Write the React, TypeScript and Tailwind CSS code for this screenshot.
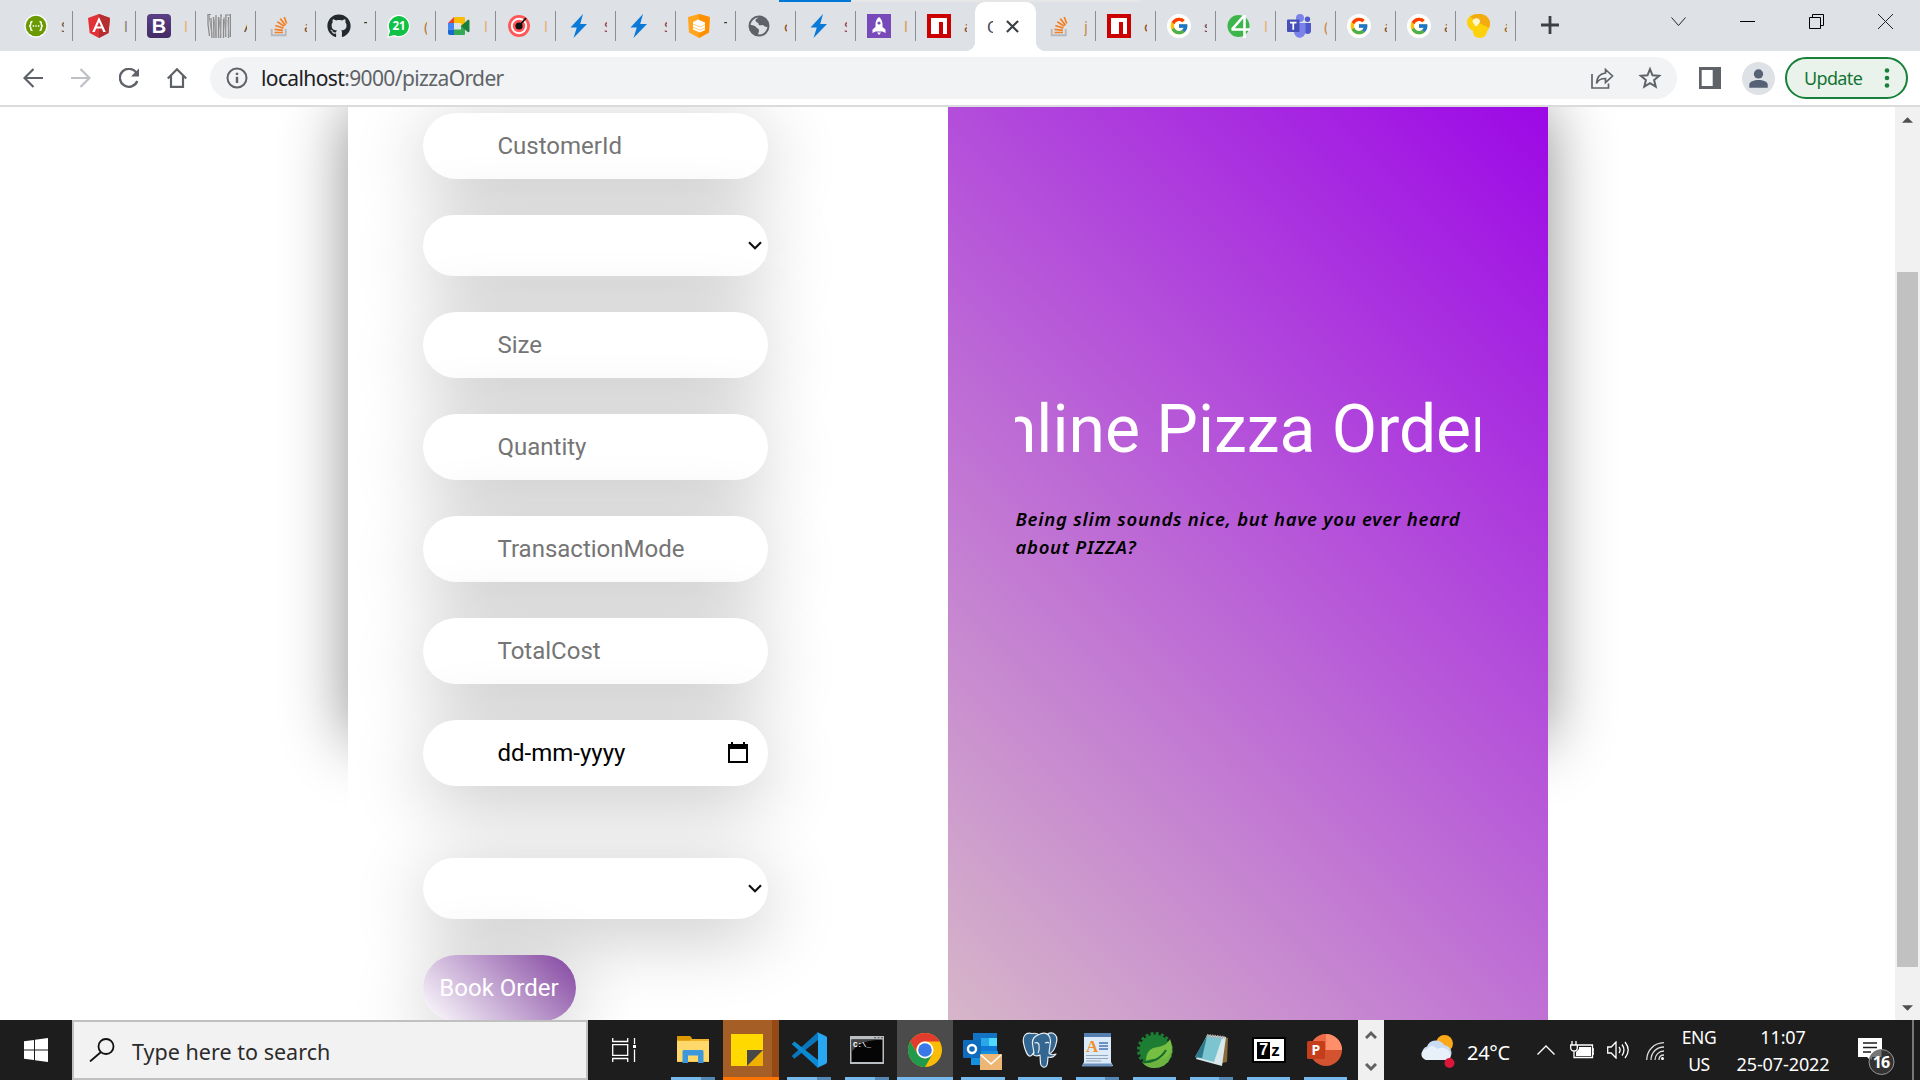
import React from "react";
import { FcGoogle } from "react-icons/fc";
import { FaGithub } from "react-icons/fa";

const Swagger = () => (
  <svg viewBox="0 0 24 24" className="size-6">
    <circle cx="12" cy="12" r="11.5" fill="#fff" />
    <circle cx="12" cy="12" r="10.3" fill="#6a9a00" />
    <path d="M8.5 7.5c-1.8 0-1.8.8-1.8 2.3 0 1.4-.3 2.2-1.6 2.2 1.3 0 1.6.8 1.6 2.2 0 1.5 0 2.3 1.8 2.3M15.5 7.5c1.8 0 1.8.8 1.8 2.3 0 1.4.3 2.2 1.6 2.2-1.3 0-1.6.8-1.6 2.2 0 1.5 0 2.3-1.8 2.3" fill="none" stroke="#fff" strokeWidth="1.5" />
    <path d="M8.7 11.3h1.4v1.4H8.7zM11.3 11.3h1.4v1.4h-1.4zM13.9 11.3h1.4v1.4h-1.4z" fill="#fff" />
  </svg>
);

const Angular = () => (
  <svg viewBox="0 0 24 24" className="size-6">
    <path d="M12 0 1 4l1.7 15L12 24l9.500-5L23 4z" fill="#e23237" />
    <path d="M12 0v24l9.500-5L23 4z" fill="#b52e31" />
    <path d="M12 3 5.200 18h2.600l1.400-3.500h5.600L16.200 18h2.600zm0 5 2 4.500h-4z" fill="#fff" />
  </svg>
);

const Bootstrap = () => (
  <div className="flex size-6 items-center justify-center rounded-[4px] bg-linear-to-b from-[#5c3f86] to-[#432c66] font-['Liberation_Sans'] text-[20px] leading-none font-bold text-white">B</div>
);

const Noise = () => (
  <svg viewBox="0 0 24 24" className="size-6" fill="none">
    <path d="M1 0v10l1.500 12M4 4l1 20M6.500 3l.5 21M9 1v23M11.500 3v21M14 1l-.5 23M16.500 5v19M19 1l-.5 22M21.500 3v21M23.500 0v23" stroke="#8b8b8b" strokeWidth="1.3" />
    <path d="M2 1l3 20M7 5l2 18M12 4l2 19M17 3l2 20M21 6l1 17" stroke="#9a9a9a" />
    <path d="M1 .5h3M13 1h2M18 1h5" stroke="#8b8b8b" />
  </svg>
);

const Stack = () => (
  <svg viewBox="0 0 24 24" className="size-6" fill="none">
    <path d="M4.700 15v6.300h14V15" stroke="#b5b9bd" strokeWidth="1.9" />
    <path d="M7.500 18.500h8.500M7.500 15.400l8.500 1M8.300 11.500l8 2.600M10.300 7.800l7 4.500M13.300 4.600l5.200 6.600M17.200 3l2.500 6.500" stroke="#f48024" strokeWidth="1.7" />
  </svg>
);

const Whatsapp = () => (
  <svg viewBox="0 0 24 24" className="size-6">
    <path d="M0 24 1.800 17.500A11.300 11.300 0 1 1 6.700 22.200z" fill="#fff" />
    <path d="M1.500 22.500 3.200 17A10 10 0 1 1 7.200 20.900z" fill="#0fc144" />
    <text x="12" y="16.3" textAnchor="middle" fontFamily="Noto Sans" fontWeight="700" fontSize="11.5" fill="#fff">21</text>
  </svg>
);

const Meet = () => (
  <svg viewBox="0 0 24 24" className="size-6">
    <path d="M1 9l6-6v6z" fill="#ea4335" />
    <path d="M7 3h9.500c1 0 1.500.5 1.500 1.500V12l-4 2V9H7z" fill="#fbbc04" />
    <path d="M1 9h6v6.500H1z" fill="#4285f4" />
    <path d="M1 15.500h6V21H3c-1.300 0-2-.7-2-2z" fill="#1967d2" />
    <path d="M7 15.500h7V12h4v7.500c0 1-.5 1.500-1.500 1.500H7z" fill="#34a853" />
    <path d="M14 12l6.500-5.700c1-.8 2-.5 2 .7v10c0 1.200-1 1.500-2 .7z" fill="#188038" />
  </svg>
);

const Target = () => (
  <svg viewBox="0 0 24 24" className="size-6">
    <circle cx="12" cy="12" r="11" fill="#ff5757" />
    <circle cx="12" cy="12" r="7.2" fill="none" stroke="#fff" strokeWidth="2" />
    <circle cx="12" cy="12" r="3.6" fill="#111" />
    <path d="M12 12 19 4" stroke="#111" strokeWidth="1.8" />
  </svg>
);

const Bolt = () => (
  <svg viewBox="0 0 24 24" className="size-6">
    <path d="M16 0 3.500 13.500h6.300L6.500 24 20 10h-6.800z" fill="#0b79d8" />
  </svg>
);

const Layers = () => (
  <svg viewBox="0 0 24 24" className="size-6">
    <path d="M12 0 22.800 3l-.8 15.500L12 24 2 18.500 1 3z" fill="#ffa51e" />
    <path d="M12 0 22.800 3l-.8 15.500L12 24z" fill="#ff9100" />
    <path d="m6 8 5-2.500 7 3V16l-5 2.400-7-3z" fill="#fff" />
    <path d="m6 10 7 3 5-2.400M6 13.200l7 3 5-2.400" fill="none" stroke="#ffc46b" strokeWidth=".8" />
  </svg>
);

const Globe = () => (
  <svg viewBox="0 0 24 24" className="size-6">
    <circle cx="12" cy="12" r="9.5" fill="#dee1e6" stroke="#5f6368" strokeWidth="2" />
    <path d="M3 11c2 0 5 .5 6 2s3 1.500 3 3.500-1 2.500-1 4.500C6 21 2.500 17 2.500 12zM12 2.500c-.5 2-3.500 2-3.500 4s3 1.500 3 3.500 3 1 4 1 2 2 4.500 2l1.500-1c0-5-4-9.500-9.500-9.500z" fill="#5f6368" />
  </svg>
);

const Rocket = () => (
  <div className="flex size-6 items-center justify-center bg-[#7749b9]">
    <svg viewBox="0 0 24 24" className="size-6" fill="#fff">
      <path d="M12 3c-2.500 2-3.500 4.500-3.500 7.500V13l-3 2.500V19l3-1.500h7l3 1.500v-3.500l-3-2.500v-2.500C15.500 7.500 14.500 5 12 3z" />
      <path d="M10 18.500h4l-2 2.500z" />
      <circle cx="12" cy="9" r="1.6" fill="#7749b9" />
    </svg>
  </div>
);

const Npm = () => (
  <svg viewBox="0 0 24 24" className="size-6">
    <path d="M0 0h24v24H0z" fill="#c00" />
    <path d="M4 4h16v16h-4V8h-4v12H4z" fill="#fff" />
  </svg>
);

const GoogleTab = () => (
  <div className="flex size-6 items-center justify-center rounded-full bg-white">
    <FcGoogle className="size-[20px]" />
  </div>
);

const Four = () => (
  <svg viewBox="0 0 24 24" className="size-6">
    <circle cx="11.5" cy="12" r="11" fill="#3db54a" />
    <path d="M17.500 1v23M16.800 2 5 15.300M4.500 15.500H23" stroke="#fff" strokeWidth="2.600" fill="none" />
  </svg>
);

const Teams = () => (
  <svg viewBox="0 0 24 24" className="size-6">
    <circle cx="13" cy="4" r="4" fill="#7b83eb" />
    <circle cx="20.5" cy="5.2" r="2.7" fill="#5059c9" />
    <path d="M17 9h7v8c0 3-4 4-6 2z" fill="#5059c9" />
    <path d="M7 9h11.500v8c0 9-11.500 9-11.500 0z" fill="#7b83eb" />
    <rect y="5.5" width="12.5" height="12.5" rx="1" fill="#464eb8" />
    <path d="M3 8.700h6.500M6.250 8.700v7" stroke="#fff" strokeWidth="1.7" />
  </svg>
);

const Keep = () => (
  <svg viewBox="0 0 24 24" className="size-6">
    <path d="M11 0c8 0 12 4 12 10 0 4-2 5-3 8s-3 6-7 6-7-2-7-7C2 15 0 12 0 8 0 3 5 0 11 0z" fill="#fdd20a" />
    <path d="M3 3C8-1 15-1 19 2c4 3 5 8 3 12L12 9z" fill="#f3ab12" />
    <path d="M6 6c2-3 7-2 7 1.500 0 2.500-2.500 2-2.500 4.500H8c0-2-3.500-3.500-2-6z" fill="#fff5d0" />
  </svg>
);

type Tab = { icon: React.ReactNode; mark: string; color: string };
const LEFT_TABS: Tab[] = [
  { icon: <Swagger />, mark: "S", color: "text-[#6b5a4a]" },
  { icon: <Angular />, mark: "l", color: "text-[#8a7c70]" },
  { icon: <Bootstrap />, mark: "l", color: "text-[#e5b168]" },
  { icon: <Noise />, mark: "A", color: "text-[#6b4a2a]" },
  { icon: <Stack />, mark: "a", color: "text-[#8a4a2a]" },
  { icon: <FaGithub className="size-6 text-[#24292e]" />, mark: "T", color: "text-[#333]" },
  { icon: <Whatsapp />, mark: "(", color: "text-[#b37a33]" },
  { icon: <Meet />, mark: "l", color: "text-[#e5b168]" },
  { icon: <Target />, mark: "l", color: "text-[#e5b168]" },
  { icon: <Bolt />, mark: "S", color: "text-[#8a3a4a]" },
  { icon: <Bolt />, mark: "S", color: "text-[#8a3a4a]" },
  { icon: <Layers />, mark: "T", color: "text-[#333]" },
  { icon: <Globe />, mark: "c", color: "text-[#8a4a1a]" },
  { icon: <Bolt />, mark: "S", color: "text-[#8a3a4a]" },
  { icon: <Rocket />, mark: "l", color: "text-[#d59b50]" },
  { icon: <Npm />, mark: "a", color: "text-[#8a4a2a]" },
];
const RIGHT_TABS: Tab[] = [
  { icon: <Stack />, mark: "j", color: "text-[#c58a45]" },
  { icon: <Npm />, mark: "c", color: "text-[#8a4a1a]" },
  { icon: <GoogleTab />, mark: "s", color: "text-[#6b3a5a]" },
  { icon: <Four />, mark: "l", color: "text-[#e5b168]" },
  { icon: <Teams />, mark: "(", color: "text-[#c58a45]" },
  { icon: <GoogleTab />, mark: "a", color: "text-[#8a4a2a]" },
  { icon: <GoogleTab />, mark: "a", color: "text-[#8a4a2a]" },
  { icon: <Keep />, mark: "a", color: "text-[#a5612a]" },
];

function BrowserTab({ tab, divider = true }: { tab: Tab; divider?: boolean }) {
  return (
    <div className="flex h-[30px] w-[60px] items-center">
      <div className="ml-[11px] size-6 shrink-0">{tab.icon}</div>
      <div className={`ml-[13px] w-[3px] overflow-hidden text-[15px] leading-[20px] ${tab.color}`}>{tab.mark}</div>
      <div className={divider ? "ml-auto h-[30px] w-[1.5px] bg-[#8b8f94]" : "ml-auto"} />
    </div>
  );
}

function TabStrip() {
  return (
    <div className="flex h-[51px] bg-[#dee1e6]">
      <div className="flex pt-[11px] pl-[16px]">
        {LEFT_TABS.map((t, i) => (
          <div key={i} className={i === 0 ? "-ml-[3px] pr-[3px]" : ""}>
            <BrowserTab tab={t} divider={i < 15} />
          </div>
        ))}
      </div>
      <div className="relative -ml-px flex h-[49px] w-[61px] items-center self-end rounded-t-[10px] bg-white pl-[12px]">
        <div className="absolute bottom-0 -left-[10px] size-[10px] bg-[radial-gradient(circle_at_0_0,#dee1e6_10px,#fff_10.5px)]" />
        <div className="absolute -right-[10px] bottom-0 size-[10px] bg-[radial-gradient(circle_at_100%_0,#dee1e6_10px,#fff_10.5px)]" />
        <div className="w-[6px] overflow-hidden text-[16px] leading-[20px] text-[#445]">O</div>
        <svg viewBox="0 0 14 14" className="ml-[13px] size-[13px]">
          <path d="M1 1l12 12M13 1 1 13" stroke="#3c4043" strokeWidth="2.4" />
        </svg>
      </div>
      <div className="flex pt-[11px]">
        {RIGHT_TABS.map((t, i) => (
          <BrowserTab key={i} tab={t} />
        ))}
      </div>
      <svg viewBox="0 0 18 18" className="mt-[16px] ml-[25px] size-[18px]">
        <path d="M9 0v18M0 9h18" stroke="#3c4043" strokeWidth="2.8" />
      </svg>
      <div className="mt-[14px] mr-[27px] ml-auto flex items-start gap-[54px]">
        <svg viewBox="0 0 15 15" className="size-[15px]" fill="none" stroke="#222"><path d="m.5 3.500 7 8 7-8" /></svg>
        <svg viewBox="0 0 15 15" className="size-[15px]" fill="none" stroke="#000"><path d="M0 7.500h15" /></svg>
        <svg viewBox="0 0 15 15" className="size-[15px]" fill="none" stroke="#000"><path d="M.5 3.500h11v11H.5zM3.500 3.500v-3h11v11h-3" /></svg>
        <svg viewBox="0 0 15 15" className="size-[15px]" fill="none" stroke="#222"><path d="m0 0 15 15M15 0 0 15" /></svg>
      </div>
    </div>
  );
}

function Toolbar() {
  return (
    <div className="flex h-[56px] items-center border-b-2 border-[#dadbdc] bg-white text-[#5f6368]">
      <div className="ml-[23px] flex gap-[28px]">
        <svg viewBox="0 0 20 20" className="size-5" fill="none" stroke="#5f6368" strokeWidth="2.2"><path d="M20 10H2M10.500 1 1.500 10l9 9" /></svg>
        <svg viewBox="0 0 20 20" className="size-5" fill="none" stroke="#bdc1c6" strokeWidth="2.2"><path d="M0 10h18M9.500 1l9 9-9 9" /></svg>
        <svg viewBox="0 0 20 20" className="size-5" fill="none" stroke="#5f6368" strokeWidth="2.3"><path d="M17.500 5A9 9 0 1 0 18.300 13" /><path d="M20 .5v8h-8z" fill="#5f6368" stroke="none" /></svg>
        <svg viewBox="0 0 20 20" className="size-5" fill="none" stroke="#5f6368" strokeWidth="2.2"><path d="M.8 10.500 10 1.300l9.200 9.200M4 8v10.800h12V8" /></svg>
      </div>
      <div className="ml-[23px] flex h-[42px] w-[1467px] items-center rounded-full bg-[#f1f3f4] pl-[16px]">
        <svg viewBox="0 0 22 22" className="size-[22px]" fill="none" stroke="#5f6368" strokeWidth="2"><circle cx="11" cy="11" r="9.5" /><path d="M11 9.800V16M11 5.800v2.300" strokeWidth="2.4" /></svg>
        <div className="ml-[13px] w-[260px] pt-[2px] text-[21px] tracking-[-0.62px] whitespace-nowrap">
          <span className="text-[#202124]">localhost</span>:9000/pizzaOrder
        </div>
        <svg viewBox="0 0 23 21" className="ml-auto h-[21px] w-[23px]" fill="none" stroke="#5f6368" strokeWidth="1.7"><path d="M1 6v14h16.500v-4.500M14.500 1.500l7 6.500-7 6.500v-4C9 10.500 7 12 5.500 15.500 6 9 9.500 5.500 14.500 5z" /></svg>
        <svg viewBox="0 0 24 24" className="mr-[15px] ml-[24px] size-6" fill="none" stroke="#5f6368" strokeWidth="2"><path d="m12 3.200 2.500 6.100 6.700.5-5.100 4.300 1.600 6.500-5.700-3.500-5.700 3.500 1.600-6.500-5.100-4.300 6.700-.5z" /></svg>
      </div>
      <svg viewBox="0 0 22 22" className="ml-[22px] size-[22px]"><path d="M0 0h22v22H0zM2.700 3v16h11V3z" fill="#5f6368" fillRule="evenodd" /></svg>
      <svg viewBox="0 0 34 34" className="ml-[21px] size-[33px]"><circle cx="17" cy="17" r="17" fill="#dee1e6" /><circle cx="17" cy="12.3" r="4.8" fill="#566176" /><path d="M7.500 26.500v-3c0-6.500 19-6.500 19 0v3z" fill="#566176" /></svg>
      <div className="ml-[10px] flex h-[42px] w-[123px] items-center rounded-full border-2 border-[#188038] bg-[#e9f3ec] pl-[17px] text-[#137333]">
        <span className="text-[18px] tracking-[-0.65px]">Update</span>
        <svg viewBox="0 0 6 20" className="mr-[16px] ml-auto h-[20px] w-[6px]" fill="#188038"><circle cx="3" cy="2.5" r="2.3" /><circle cx="3" cy="10" r="2.3" /><circle cx="3" cy="17.5" r="2.3" /></svg>
      </div>
    </div>
  );
}

const FIELD_SHADOW = "shadow-[0_15px_75px_rgba(0,0,0,0.24)]";

function TextField({ label }: { label: string }) {
  return (
    <div className={`mb-[36px] flex h-[66px] w-[345px] items-center rounded-full bg-white pl-[75px] text-[24px] text-[#757575] ${FIELD_SHADOW}`}>
      {label}
    </div>
  );
}

function SelectField() {
  return (
    <div className={`mb-[36px] flex h-[61px] w-[345px] items-center justify-end rounded-full bg-white pr-[6px] ${FIELD_SHADOW}`}>
      <svg viewBox="0 0 14 9" className="h-[9px] w-[14px]" fill="none" stroke="#111" strokeWidth="2.2"><path d="m1 1.300 6 6 6-6" /></svg>
    </div>
  );
}

function OrderPage() {
  return (
    <div className="flex h-[913px] overflow-hidden bg-white">
      <div className="flex w-[1895px] justify-center overflow-hidden">
        <div className="h-[633px] w-[1200px] shadow-[0_0_60px_rgba(0,0,0,0.45)]">
          <div className="flex h-[913px]">
            <div className="w-[600px] bg-white pt-[6px] pl-[75px] font-[Roboto]">
              <TextField label="CustomerId" />
              <SelectField />
              <TextField label="Size" />
              <TextField label="Quantity" />
              <TextField label="TransactionMode" />
              <TextField label="TotalCost" />
              <div className={`mb-[72px] flex h-[66px] w-[345px] items-center rounded-full bg-white pr-[20px] pl-[75px] text-[24px] text-black ${FIELD_SHADOW}`}>
                dd-mm-yyyy
                <svg viewBox="0 0 20 21" className="mb-[2px] ml-auto h-[21px] w-[20px]"><path d="M0 2h3V0h2v2h10V0h2v2h3v19H0zM2 7v12h16V7z" fill="#000" fillRule="evenodd" /></svg>
              </div>
              <SelectField />
              <div className={`flex h-[66px] w-[153px] items-center justify-center rounded-full bg-[linear-gradient(45deg,#fff,#8244a0)] text-[24px] text-white ${FIELD_SHADOW}`}>
                Book Order
              </div>
            </div>
            <div className="w-[600px] bg-[linear-gradient(45deg,#d6b6c8,#9c08e6)] pt-[277px] pl-[67px]">
              <div className="flex h-[90px] w-[465px] items-center justify-center overflow-hidden font-[Roboto] text-[66px] whitespace-nowrap text-white">
                <span className="mr-[46px] shrink-0">Online Pizza Order</span>
              </div>
              <div className="mt-[31px] ml-px text-[18.5px] leading-[28px] font-semibold tracking-[0.75px] whitespace-nowrap text-black italic">
                Being slim sounds nice, but have you ever heard
                <br />
                about PIZZA?
              </div>
            </div>
          </div>
        </div>
      </div>
      <div className="flex w-[25px] flex-col items-center bg-[#f1f1f1]">
        <svg viewBox="0 0 12 6" className="mt-[10px] h-[6px] w-[11px]"><path d="M0 6 6 0l6 6z" fill="#505050" /></svg>
        <div className="mt-[149px] h-[695px] w-[21px] bg-[#c1c1c1]" />
        <svg viewBox="0 0 12 6" className="mt-[38px] h-[6px] w-[11px]"><path d="m0 0 6 6 6-6z" fill="#505050" /></svg>
      </div>
    </div>
  );
}

const Explorer = () => (
  <svg viewBox="0 0 32 32" className="size-8">
    <path d="M0 3h13l2 2h17v23H0z" fill="#f0b429" />
    <path d="M0 7h32v20.500H0z" fill="#ffd86b" />
    <path d="M0 3c0-.6.400-1 1-1h12l2 2-2 2.500H0z" fill="#dc9a00" />
    <path d="M5.500 29V18c0-1.500.5-2 2-2h17c1.500 0 2 .5 2 2v11h-5.500v-7.500H11V29z" fill="#3c97dc" />
  </svg>
);
const Sticky = () => (
  <svg viewBox="0 0 32 32" className="size-8">
    <path d="M0 0h32v32H0z" fill="#ffd900" /><path d="M16 16h16v16H16z" fill="#f0b000" /><path d="M16 16h16L16 32z" fill="#484848" />
  </svg>
);
const VsCode = () => (
  <svg viewBox="0 0 36 36" className="size-9">
    <path d="m.7 24 2.600 2.800L27 8V0z" fill="#0a77bd" />
    <path d="m.7 12 2.800-2.600L27 28v8z" fill="#0a8ad3" />
    <path d="m26 0 8.500 4c1 .5 1.500 1 1.500 2v24c0 1-.5 1.500-1.500 2L26 36c1-1 1-1.500 1-2V2c0-.8-.2-1.300-1-2z" fill="#28a8f0" />
  </svg>
);
const Cmd = () => (
  <svg viewBox="0 0 34 28" className="h-[28px] w-[34px]">
    <path d="M0 0h34v28H0z" fill="#b9bec2" /><path d="M1.500 3.500h31v22.500h-31z" fill="#050505" />
    <path d="M1.500 3.500h31C18 4 8 7 1.500 16z" fill="#454545" />
    <path d="M24 1.700h2M27.500 1.700h2M31 1.700h2" stroke="#555" />
    <text x="3" y="10.5" fontFamily="Liberation Mono" fontSize="7.5" fontWeight="700" fill="#fff">C:\_</text>
  </svg>
);
const Chrome = () => (
  <svg viewBox="0 0 34 34" className="size-[34px]">
    <circle cx="17" cy="17" r="17" fill="#fbbc05" />
    <path d="M2.300 8.500A17 17 0 0 1 31.700 8.500H17a8.500 8.500 0 0 0-7.400 12.800z" fill="#e33b2e" />
    <path d="M2.300 8.500 9.600 21.300 17 25.500 24.400 21.300 17 34A17 17 0 0 1 2.300 8.500z" fill="#219a4c" />
    <circle cx="17" cy="17" r="8.5" fill="#fff" /><circle cx="17" cy="17" r="6.8" fill="#3b78e7" />
  </svg>
);
const Outlook = () => (
  <svg viewBox="0 0 40 38" className="mt-[4px] h-[38px] w-[40px]">
    <path d="M10 0h24v22H10z" fill="#1373c4" /><path d="M18 5h8v8h-8z" fill="#28a8ea" /><path d="M26 5h8v8h-8z" fill="#50d9ff" /><path d="M18 13h16v8H18z" fill="#0f78d4" />
    <path d="M8 18h27v14H8z" fill="#1490df" />
    <rect y="7" width="18" height="18" rx="1" fill="#0f6cbd" /><circle cx="9" cy="16" r="4" fill="none" stroke="#fff" strokeWidth="2.4" />
    <path d="M17 21h22v16H17z" fill="#edb675" /><path d="m18 22 10 9 10-9" fill="none" stroke="#fff" strokeWidth="1.6" />
  </svg>
);
const Postgres = () => (
  <svg viewBox="0 0 36 36" className="size-9" stroke="#e8eef3" strokeWidth="1.2" fill="#336791" strokeLinejoin="round">
    <path d="M10 1.500C3 0 .5 4.500 1.500 11c1 6 4 14 7 13 1.500-.5 3-3 4-5l5-16c-2-1.500-5-2-7.500-1.500z" />
    <path d="M26 1.500c6-2 10 2 8.500 8.500-1 5-3 9-5.500 11l-4 1z" />
    <path d="M18 2c7-3 12 2 10 11l-1 8c1 2 4 2 7 1-2 3-5 4-8 3-.5 4 0 7-1.500 9s-5.500 1.500-6-2.500L18 23c-4 2-8 0-6-2l-1.500-9C10 6 13 4 18 2z" />
    <path d="M12.500 11c2-1 4.500 0 4.500 2s1 5-1 8M23 11c2-1 3-1 4 0" fill="none" />
  </svg>
);
const WordPad = () => (
  <svg viewBox="0 0 32 34" className="h-[34px] w-[32px]">
    <path d="M2 0h27v29l2 4H0l2-4z" fill="#dcebfa" /><path d="M2 0h27v4H2z" fill="#557fae" /><path d="M1.500 30.500h28l1 3H0z" fill="#6d93bd" />
    <text x="4" y="19" fontFamily="Liberation Serif" fontSize="17" fontWeight="700" fill="#f4902c">A</text>
    <path d="M17 10h9M17 13h9M17 16h9" stroke="#4a73b8" strokeWidth="1.3" /><path d="M4 22.500h22M4 25.500h22M4 28h15" stroke="#97a7b8" />
  </svg>
);
const Spring = () => (
  <svg viewBox="0 0 36 36" className="size-9">
    <circle cx="18" cy="18" r="15.5" fill="#1c7d33" /><circle cx="18" cy="18" r="16.5" fill="none" stroke="#1c7d33" strokeWidth="3" strokeDasharray="3 2.2" />
    <path d="M33.500 9C39 22 31 36 18 36 12 36 8 34 5 30c14 2 24-7 28.500-21z" fill="#6db33f" />
    <path d="M33 7c4 12-1 20-11 20-5 0-8 0-13 2 0-9 4-13 12-14 6-1 9-3 12-8z" fill="#77bf43" />
    <path d="M5 30c9 1 19-3 24-12" fill="none" stroke="#166b2b" strokeWidth="2" />
  </svg>
);
const Notepad = () => (
  <svg viewBox="0 0 34 32" className="h-[32px] w-[34px]">
    <path d="M29 3l4 1-1 24-5 1z" fill="#8a6a3a" /><path d="M12 1 31 3 27 32 1 25z" fill="#d9e8ea" />
    <path d="M12 2 27 4 19 28 0 23z" fill="#7cc4d0" /><path d="M12 2 7 24 0 23z" fill="#30798c" /><path d="M12 1.500 30 3.500" stroke="#aaa" strokeWidth="3" strokeDasharray="1.5 1" />
  </svg>
);
const SevenZip = () => (
  <div className="flex h-[26px] w-[34px] items-center justify-center border-2 border-black bg-white">
    <div className="flex h-[17px] w-[13px] items-center justify-center bg-black font-['Liberation_Sans'] text-[16px] leading-none font-bold text-white">7</div>
    <div className="ml-px font-['Liberation_Sans'] text-[17px] leading-none font-bold text-black">z</div>
  </div>
);
const PowerPoint = () => (
  <svg viewBox="0 0 36 34" className="h-[34px] w-[36px]">
    <circle cx="19" cy="17" r="16" fill="#d35230" /><path d="M19 1a16 16 0 0 1 16 16H19z" fill="#ff8f6b" /><path d="M19 1A16 16 0 0 0 3 17h16z" fill="#ed6c47" />
    <rect y="8" width="18" height="18" rx="1.5" fill="#c43e1c" />
    <text x="4.5" y="22" fontFamily="Noto Sans" fontSize="14" fontWeight="700" fill="#fff">P</text>
  </svg>
);

type TaskbarApp = { icon: React.ReactNode; box: string; bar: string; tail?: string };
const APPS: TaskbarApp[] = [
  { icon: <Explorer />, box: "w-[44px]", bar: "bg-[#76b9ed]", tail: "bg-[#5588b4]" },
  { icon: <Sticky />, box: "ml-[8px] w-[56px] bg-[linear-gradient(90deg,#a65e27_49px,#954a16_49px)] pr-[8px]", bar: "-mr-[8px] bg-[#ff7300]" },
  { icon: <VsCode />, box: "ml-[8px] w-[44px]", bar: "bg-[#76b9ed]", tail: "bg-[#5588b4]" },
  { icon: <Cmd />, box: "ml-[14px] w-[44px]", bar: "bg-[#76b9ed]", tail: "bg-[#5588b4]" },
  { icon: <Chrome />, box: "ml-[8px] w-[56px] bg-[#4b4b4b]", bar: "bg-[#76b9ed]" },
  { icon: <Outlook />, box: "ml-[8px] w-[44px]", bar: "bg-[#76b9ed]" },
  { icon: <Postgres />, box: "ml-[13px] w-[44px]", bar: "bg-[#76b9ed]" },
  { icon: <WordPad />, box: "ml-[14px] w-[43px]", bar: "bg-[#76b9ed]", tail: "bg-[#5588b4]" },
  { icon: <Spring />, box: "ml-[14px] w-[43px]", bar: "bg-[#76b9ed]" },
  { icon: <Notepad />, box: "ml-[14px] w-[43px]", bar: "bg-[#76b9ed]", tail: "bg-[#5588b4]" },
  { icon: <SevenZip />, box: "ml-[14px] w-[43px]", bar: "bg-[#76b9ed]" },
  { icon: <PowerPoint />, box: "ml-[14px] w-[43px] pr-[2px]", bar: "-mr-[2px] bg-[#76b9ed]" },
];

function Taskbar() {
  return (
    <div className="flex h-[60px] items-stretch bg-[#1d1d1d] text-white">
      <div className="flex w-[72px] items-center justify-center">
        <svg viewBox="0 0 24 24" className="size-6" fill="#fff"><path d="M0 3.300 10 2v9.500H0zM11 1.800 24 0v11.500H11zM0 12.500h10V22L0 20.700zM11 12.500h13V24l-13-1.800z" /></svg>
      </div>
      <div className="flex w-[516px] items-center border-2 border-[#c0c0c0] bg-[#f2f2f2] pl-[15px] text-[#2b2b2b]">
        <svg viewBox="0 0 26 24" className="h-[24px] w-[26px]" fill="none" stroke="#111" strokeWidth="1.8"><circle cx="17" cy="8.5" r="7.5" /><path d="M12 14 1 23.500" /></svg>
        <span className="ml-[17px] pt-[4px] text-[21.5px] tracking-[0.02px]">Type here to search</span>
      </div>
      <div className="flex w-[83px] items-center pl-[24px]">
        <svg viewBox="0 0 24 24" className="size-6" fill="none" stroke="#fff" strokeWidth="1.3"><path d="M.7 6.700h15v10.600H.7zM.7 0v3.500h15V0M.7 24v-3.500h15V24M22.500 0v6M22.500 11.500V24" /><path d="M21 7h3v3h-3z" fill="#fff" stroke="none" /></svg>
      </div>
      {APPS.map((a, i) => (
        <div key={i} className={`flex shrink-0 flex-col ${a.box}`}>
          <div className="flex flex-1 items-center justify-center pt-[3px]">{a.icon}</div>
          <div className={`flex h-[3px] justify-end ${a.bar}`}>{a.tail && <div className={`w-[14px] ${a.tail}`} />}</div>
        </div>
      ))}
      <div className="ml-[11px] flex w-[26px] flex-col items-center justify-between bg-[#f0f0f0] pt-[10px] pb-[8px]">
        <svg viewBox="0 0 12 9" className="h-[9px] w-[12px]" fill="none" stroke="#606060" strokeWidth="3"><path d="m1 8 5-5 5 5" /></svg>
        <svg viewBox="0 0 12 9" className="h-[9px] w-[12px]" fill="none" stroke="#606060" strokeWidth="3"><path d="m1 1 5 5 5-5" /></svg>
      </div>
      <div className="flex flex-1 items-center">
        <svg viewBox="0 0 34 34" className="mt-[3px] ml-[37px] size-[34px]">
          <circle cx="23.5" cy="8.5" r="8.5" fill="#fba919" /><path d="M7 25a7 7 0 0 1-1-13.500A9.500 9.500 0 0 1 23 10c5 1 9 5 7 11-1 3-3 4-5 4z" fill="#c9dcf3" /><path d="M7 25c-8 0-9-10-1-11 3-5 9-3 10 0 6-3 12 0 13 5 .5 4-2 6-5 6z" fill="#e8f0fa" />
          <circle cx="28.5" cy="28" r="5" fill="#dc1638" />
        </svg>
        <span className="ml-[12px] w-[45px] pt-[5px] text-[20px] tracking-[-0.3px]">24°C</span>
        <svg viewBox="0 0 18 10" className="ml-[25px] h-[10px] w-[18px]" fill="none" stroke="#fff" strokeWidth="1.4"><path d="m.5 9.500 8.500-8.500 8.500 8.500" /></svg>
        <svg viewBox="0 0 24 18" className="ml-[15px] h-[18px] w-[24px]" fill="none" stroke="#fff" strokeWidth="1.3"><path d="M6 4h16.500v12.500H7M22.500 8H24v5h-1.500M2 0v4M6 0v4M.7 4h6.600v3c0 4-6.600 4-6.600 0zM4 10v6.500h3" /><path d="M9 6h12v9H6v-4l3-3z" fill="#fff" stroke="none" /></svg>
        <svg viewBox="0 0 22 18" className="ml-[13px] h-[18px] w-[22px]" fill="none" stroke="#fff" strokeWidth="1.3"><path d="M.7 6h3.500L9 1v16l-4.800-5H.7zM12 6c1.500 2 1.500 4 0 6M15 3.500c2.500 3.500 2.500 7.500 0 11M18 1c4 5 4 11 0 16" /></svg>
        <svg viewBox="0 0 18 18" className="mt-[2px] ml-[17px] h-[18px] w-[18px]" fill="none" stroke="#ddd" strokeWidth="1.3"><path d="M.7 18C1 8 8 1 18 .7M5 18C5 10.500 10.500 5 18 5M9 18c0-5 4-9 9-9M13 18c0-3 2-5 5-5" /><circle cx="16.5" cy="16.5" r="1.5" fill="#fff" stroke="none" /></svg>
        <div className="ml-[15px] w-[40px] pt-[2px] text-center text-[17.5px] leading-[27px] tracking-[-0.5px]">ENG<br />US</div>
        <div className="ml-[10px] w-[108px] pt-px text-center text-[18px] leading-[27px] tracking-[-0.1px]">11:07<br />25-07-2022</div>
        <div className="mt-[11px] ml-[21px] h-[38px] w-[38px]">
          <svg viewBox="0 0 38 38" className="size-[38px]">
            <path d="M0 1h24v19H14v5l-5-5H0z" fill="#fff" /><path d="M5 6h14M5 10.500h14M5 15h8" stroke="#1d1d1d" strokeWidth="1.4" />
            <circle cx="23.5" cy="25" r="12.5" fill="#333" stroke="#999" />
            <path d="M11.500 20.500A12.500 12.500 0 0 1 23.500 12.800V20H14v3z" fill="#777" />
            <text x="23" y="31" textAnchor="middle" fontFamily="Noto Sans" fontWeight="700" fontSize="16" letterSpacing="-1" fill="#fff">16</text>
          </svg>
        </div>
        <div className="mr-[6px] ml-auto h-full w-[2px] bg-[#777]" />
      </div>
    </div>
  );
}

export default function App() {
  return (
    <div className="relative h-[1080px] w-[1920px] overflow-hidden bg-white font-['Noto_Sans',sans-serif]">
      <TabStrip />
      <Toolbar />
      <OrderPage />
      <Taskbar />
      <div className="absolute top-0 left-[779px] flex h-[2px] w-[362px] bg-[#e6e6e6]">
        <div className="w-[72px] bg-[#0078d7]" />
      </div>
    </div>
  );
}
